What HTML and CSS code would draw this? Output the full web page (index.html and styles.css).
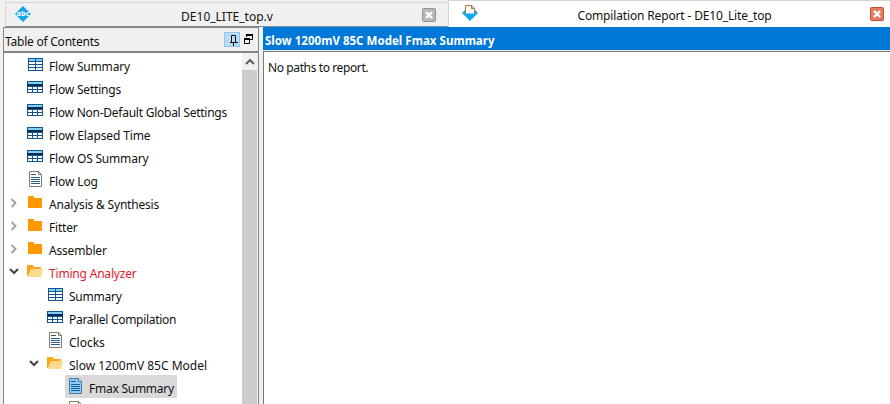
FILE: index.html
```html
<!DOCTYPE html>
<html lang="en">
<head>
<meta charset="utf-8">
<title>Compilation Report</title>
<link rel="stylesheet" href="styles.css">
</head>
<body>
<svg class="defs" width="0" height="0">
  <symbol id="table" viewBox="0 0 16 16"><path fill="#14568c" d="M1 1h15v13H1z"/><path fill="#7fd0f8" d="M2 2h6v2H2zM9 2h6v2H9z"/><path fill="#fff" d="M2 5h6v2H2zM9 5h6v2H9zM2 8h6v2H2zM9 8h6v2H9zM2 11h6v2H2zM9 11h6v2H9z"/></symbol>
  <symbol id="grid" viewBox="0 0 16 16"><path fill="#14568c" d="M0 1h16v12H0z"/><path fill="#7fd0f8" d="M1 2h14v2H1z"/><path fill="#062b50" d="M0 4h16v2H0z"/><path fill="#fff" d="M1 7h4v2H1zM6 7h4v2H6zM11 7h4v2h-4zM1 10h4v2H1zM6 10h4v2H6zM11 10h4v2h-4z"/></symbol>
  <symbol id="doc" viewBox="0 0 16 16"><path fill="#fffdf8" stroke="#8d7967" d="M2.500.5h9l3 3v12h-12z"/><path fill="none" stroke="#8d7967" d="M11.500.5v3h3"/><path stroke="#28598c" d="M4 3.500h5M4 6.500h9M4 8.500h9M4 10.500h9M4 12.500h9"/></symbol>
  <symbol id="docsel" viewBox="0 0 16 16"><path fill="#8ecbf5" stroke="#477ba6" d="M2.500.5h9l3 3v12h-12z"/><path fill="#d9effc" stroke="#477ba6" d="M11.500.5v3h3"/><path stroke="#145e9d" d="M4 3.500h5M4 6.500h9M4 8.500h9M4 10.500h9M4 12.500h9"/></symbol>
  <symbol id="folder" viewBox="0 0 16 16"><path fill="#ff9800" d="M1 1h6v2h8v10H1z"/></symbol>
  <symbol id="open" viewBox="0 0 16 16"><path fill="#ffa51c" d="M0 1h6l1 2h7v3H4l-3 6H0z"/><path fill="#ffd98c" d="M4 5h12l-2 8H1z"/></symbol>
  <symbol id="right" viewBox="0 0 10 10"><path fill="none" stroke="#a0a0a0" stroke-width="1.900" d="M2.500 1l4 4-4 4"/></symbol>
  <symbol id="down" viewBox="0 0 10 10"><path fill="none" stroke="#444" stroke-width="2" d="M1 2l4 4 4-4"/></symbol>
</svg>
<div class="window">
  <header class="tabs">
    <div class="tab source">
      <svg class="tab-icon" width="18" height="18" viewBox="0 0 18 18"><path fill="#13a4ec" d="M9 1l8 8-8 8-8-8z"/><text x="9" y="11" text-anchor="middle" class="abc">abc</text></svg>
      <span class="tab-title">DE10_LITE_top.v</span>
      <svg class="close" width="14" height="14" viewBox="0 0 14 14"><rect x=".5" y=".5" width="13" height="13" rx="1" fill="#b7b7b7" stroke="#939393"/><path stroke="#fff" stroke-width="2.400" d="M4 4l6 6M10 4l-6 6"/></svg>
    </div>
    <div class="tab report">
      <svg class="tab-icon" width="18" height="18" viewBox="0 0 18 18"><path fill="#13a4ec" d="M1 9l3-3h10l3 3-8 8z"/><path fill="#fff7e8" stroke="#a17c4e" d="M4.500 9.500v-8h6l3 3v5"/><path fill="none" stroke="#a17c4e" d="M10.500 1.500v3h3"/></svg>
      <span class="tab-title">Compilation Report - DE10_Lite_top</span>
      <svg class="close" width="14" height="14" viewBox="0 0 14 14"><rect x=".5" y=".5" width="13" height="13" rx="1" fill="#e37c5c" stroke="#c24f2f"/><path stroke="#fff" stroke-width="2.400" d="M4 4l6 6M10 4l-6 6"/></svg>
    </div>
  </header>
  <div class="panes">
    <aside class="contents">
      <div class="contents-head"><span class="heading">Table of Contents</span>
        <span class="pin"><svg width="14" height="13" viewBox="0 0 14 13"><path fill="none" stroke="#111" d="M6.500 9V2.500h4V9M5 9.500h8M8.500 10v3"/></svg></span>
        <svg class="float" width="9" height="10" viewBox="0 0 9 10"><path fill="none" stroke="#000" d="M2.500 3V.5h6v5H6M.5 4.500h5v5h-5z"/><path stroke="#000" stroke-width="2" d="M2 1h7M0 5h6"/></svg>
      </div>
      <div class="tree-area">
        <ul class="tree">
          <li><i></i><svg class="icon"><use href="#table"/></svg><span class="mid">Flow Summary</span></li>
          <li><i></i><svg class="icon"><use href="#grid"/></svg><span class="mid">Flow Settings</span></li>
          <li><i></i><svg class="icon"><use href="#grid"/></svg><span class="tight">Flow Non-Default Global Settings</span></li>
          <li><i></i><svg class="icon"><use href="#grid"/></svg><span class="loose">Flow Elapsed Time</span></li>
          <li><i></i><svg class="icon"><use href="#grid"/></svg><span class="mid">Flow OS Summary</span></li>
          <li><i></i><svg class="icon doc"><use href="#doc"/></svg><span class="loose">Flow Log</span></li>
          <li><svg class="arrow"><use href="#right"/></svg><svg class="icon"><use href="#folder"/></svg><span class="mid">Analysis &amp; Synthesis</span></li>
          <li><svg class="arrow"><use href="#right"/></svg><svg class="icon"><use href="#folder"/></svg><span class="mid">Fitter</span></li>
          <li><svg class="arrow"><use href="#right"/></svg><svg class="icon"><use href="#folder"/></svg><span class="mid">Assembler</span></li>
          <li><svg class="arrow"><use href="#down"/></svg><svg class="icon"><use href="#open"/></svg><span class="mid alert">Timing Analyzer</span></li>
          <li class="l1"><i></i><svg class="icon"><use href="#table"/></svg><span class="tight">Summary</span></li>
          <li class="l1"><i></i><svg class="icon"><use href="#grid"/></svg><span class="tighter">Parallel Compilation</span></li>
          <li class="l1"><i></i><svg class="icon doc"><use href="#doc"/></svg><span>Clocks</span></li>
          <li class="l1"><svg class="arrow"><use href="#down"/></svg><svg class="icon"><use href="#open"/></svg><span>Slow 1200mV 85C Model</span></li>
          <li class="l2"><i></i><div class="selected"><svg class="icon doc"><use href="#docsel"/></svg><span class="tight">Fmax Summary</span></div></li>
          <li class="l2"><i></i><svg class="icon doc"><use href="#doc"/></svg></li>
        </ul>
        <div class="scrollbar"><div class="scroll-up"><svg width="10" height="10" viewBox="0 0 10 10"><path fill="none" stroke="#555" stroke-width="1.900" d="M1 7l4-4 4 4"/></svg></div></div>
      </div>
    </aside>
    <main class="report-pane">
      <h1>Slow 1200mV 85C Model Fmax Summary</h1>
      <div class="report-body"><p>No paths to report.</p></div>
    </main>
  </div>
</div>
</body>
</html>
```
FILE: styles.css
```css
* { box-sizing: border-box; }
body { margin: 0; overflow: hidden; background: #f0f0f0; color: #111; font: 12px/23px "Noto Sans", "Open Sans", sans-serif; }
.defs { position: absolute; }
svg { display: block; flex: none; }
.window { height: 404px; display: flex; flex-direction: column; }
.tabs { display: flex; height: 27px; flex: none; padding-left: 5px; }
.tab { display: flex; align-items: flex-start; }
.source { width: 443px; height: 25px; margin-top: 2px; border: 1px solid #d5d5d5; border-right: 0; border-bottom-color: #7c91a0; padding: 2px 12px 0 8px; }
.report { flex: 1; background: #fff; border: 1px solid #d5d5d5; border-width: 1px 0 0 1px; padding: 3px 6px 0 12px; }
.tab-title { flex: 1; text-align: center; white-space: nowrap; }
.close { margin-top: 3px; }
.report .tab-title { letter-spacing: -.15px; }
.abc { font: bold 7.5px "Noto Sans", sans-serif; fill: #fff; }
.panes { flex: 1; min-height: 0; display: flex; gap: 4px; padding-left: 3px; }
.contents { width: 256px; flex: none; border: 1px solid #858585; border-bottom: 0; display: flex; flex-direction: column; }
.contents-head { height: 25px; flex: none; display: flex; align-items: center; padding: 0 5px 1px 1px; border-bottom: 2px solid #858585; }
.heading { flex: 1; padding-top: 4px; letter-spacing: -.23px; }
.pin { width: 16px; height: 15px; background: #b9dcf5; border: 1px solid #91c4e8; margin-right: 4px; display: flex; align-items: center; justify-content: center; }
.tree-area { flex: 1; min-height: 0; display: flex; background: #fff; }
.tree { flex: 1; min-width: 0; list-style: none; margin: 0; padding: 0 0 0 5px; overflow: hidden; }
li { display: flex; align-items: center; height: 23px; white-space: nowrap; }
li i, .arrow { width: 10px; height: 10px; flex: none; margin-right: 8px; }
.icon { width: 16px; height: 16px; margin: 1px 6px 0 0; }
.doc { margin-top: -1px; }
li span { padding-top: 4px; }
.loose { letter-spacing: -.12px; }
.mid { letter-spacing: -.19px; }
.tight { letter-spacing: -.25px; }
.tighter { letter-spacing: -.3px; }
.l1 { padding-left: 20px; }
.l2 { padding-left: 40px; }
.selected { height: 23px; display: flex; align-items: center; background: #d9d9d9; margin-left: -2px; padding: 0 3px 0 2px; }
.alert { color: #e1192d; }
.scrollbar { width: 16px; flex: none; background: #cdcdcd; border-right: 1px solid #f0f0f0; }
.scroll-up { height: 17px; background: #f0f0f0; display: flex; align-items: center; justify-content: center; }
.report-pane { flex: 1; display: flex; flex-direction: column; }
h1 { margin: 0; height: 23px; padding: 2px 0 0 2px; font: bold 11.5px/23px "Noto Sans", sans-serif; letter-spacing: .03px; color: #fff; background: #0078d7; }
.report-body { flex: 1; margin-top: 1px; border: 1px solid #777; border-width: 1px 0 0 1px; background: #fff; padding: 4px; }
p { margin: 0; letter-spacing: -.39px; }
```
